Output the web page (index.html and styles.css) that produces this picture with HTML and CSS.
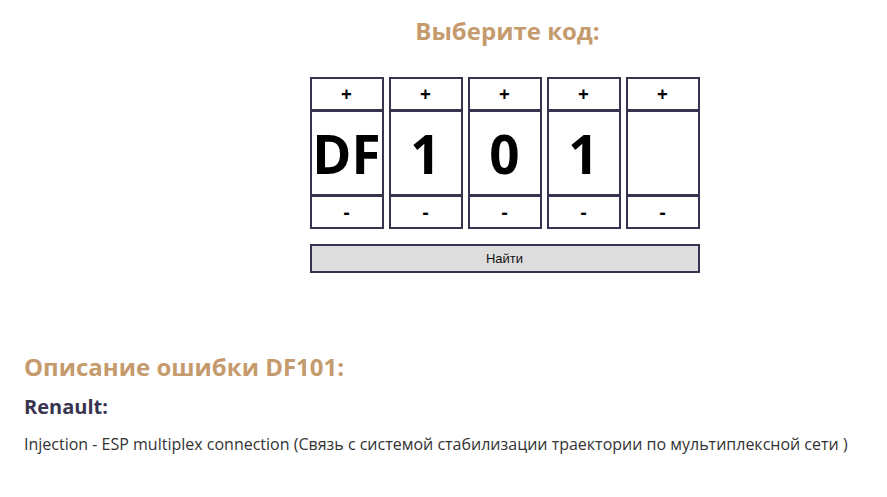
FILE: index.html
```html
<!DOCTYPE html>
<html lang="ru">
<head>
<meta charset="utf-8">
<link rel="stylesheet" href="styles.css">
</head>
<body>
<div class="page">
  <section class="picker">
    <h2 class="picker-title">Выберите код:</h2>
    <div class="columns">
      <div class="col">
        <div class="btn-step">+</div>
        <div class="value">DF</div>
        <div class="btn-step">-</div>
      </div>
      <div class="col">
        <div class="btn-step">+</div>
        <div class="value">1</div>
        <div class="btn-step">-</div>
      </div>
      <div class="col">
        <div class="btn-step">+</div>
        <div class="value">0</div>
        <div class="btn-step">-</div>
      </div>
      <div class="col">
        <div class="btn-step">+</div>
        <div class="value">1</div>
        <div class="btn-step">-</div>
      </div>
      <div class="col">
        <div class="btn-step">+</div>
        <div class="value"></div>
        <div class="btn-step">-</div>
      </div>
    </div>
    <button class="find">Найти</button>
  </section>
  <section class="desc">
    <h2 class="desc-title">Описание ошибки DF101:</h2>
    <h3 class="brand">Renault:</h3>
    <p class="text">Injection - ESP multiplex connection (Связь с системой стабилизации траектории по мультиплексной сети )</p>
  </section>
</div>
</body>
</html>
```
FILE: styles.css
```css
html, body {
  margin: 0;
  padding: 0;
  background: #ffffff;
}
body {
  font-family: "Open Sans", "DejaVu Sans", sans-serif;
  color: #222;
}
.page {
  padding: 0 24px;
}
.picker {
  display: flex;
  flex-direction: column;
  align-items: center;
  padding-left: 122px;
  padding-top: 14px;
}
.picker-title {
  margin: 0;
  padding-left: 6px;
  font-size: 24px;
  line-height: 33px;
  font-weight: 700;
  color: #c59b6d;
}
.columns {
  display: flex;
  gap: 5px;
  margin-top: 30px;
}
.col {
  width: 74px;
  display: flex;
  flex-direction: column;
}
.btn-step {
  box-sizing: border-box;
  height: 34px;
  border: 2px solid #38334f;
  display: flex;
  align-items: center;
  justify-content: center;
  font-size: 19px;
  font-weight: 700;
  color: #000;
}
.value {
  box-sizing: border-box;
  height: 84px;
  border: 2px solid #38334f;
  border-top-width: 1px;
  border-bottom-width: 1px;
  display: flex;
  align-items: center;
  justify-content: center;
  font-size: 53px;
  font-weight: 700;
  color: #000;
  overflow: visible;
  white-space: nowrap;
}
.find {
  margin-top: 15px;
  width: 390px;
  height: 29px;
  box-sizing: border-box;
  border: 2px solid #38334f;
  background: #dddddd;
  font-family: "Liberation Sans", Arial, sans-serif;
  font-size: 13px;
  color: #111;
  padding: 0;
}
.desc {
  margin-top: 77px;
}
.desc-title {
  margin: 0;
  font-size: 24px;
  line-height: 33px;
  font-weight: 700;
  color: #c59b6d;
}
.brand {
  margin: 10px 0 0;
  font-size: 20px;
  line-height: 28px;
  font-weight: 700;
  color: #38334f;
}
.text {
  margin: 11px 0 0;
  font-size: 16px;
  line-height: 24px;
  color: #333;
}
```
